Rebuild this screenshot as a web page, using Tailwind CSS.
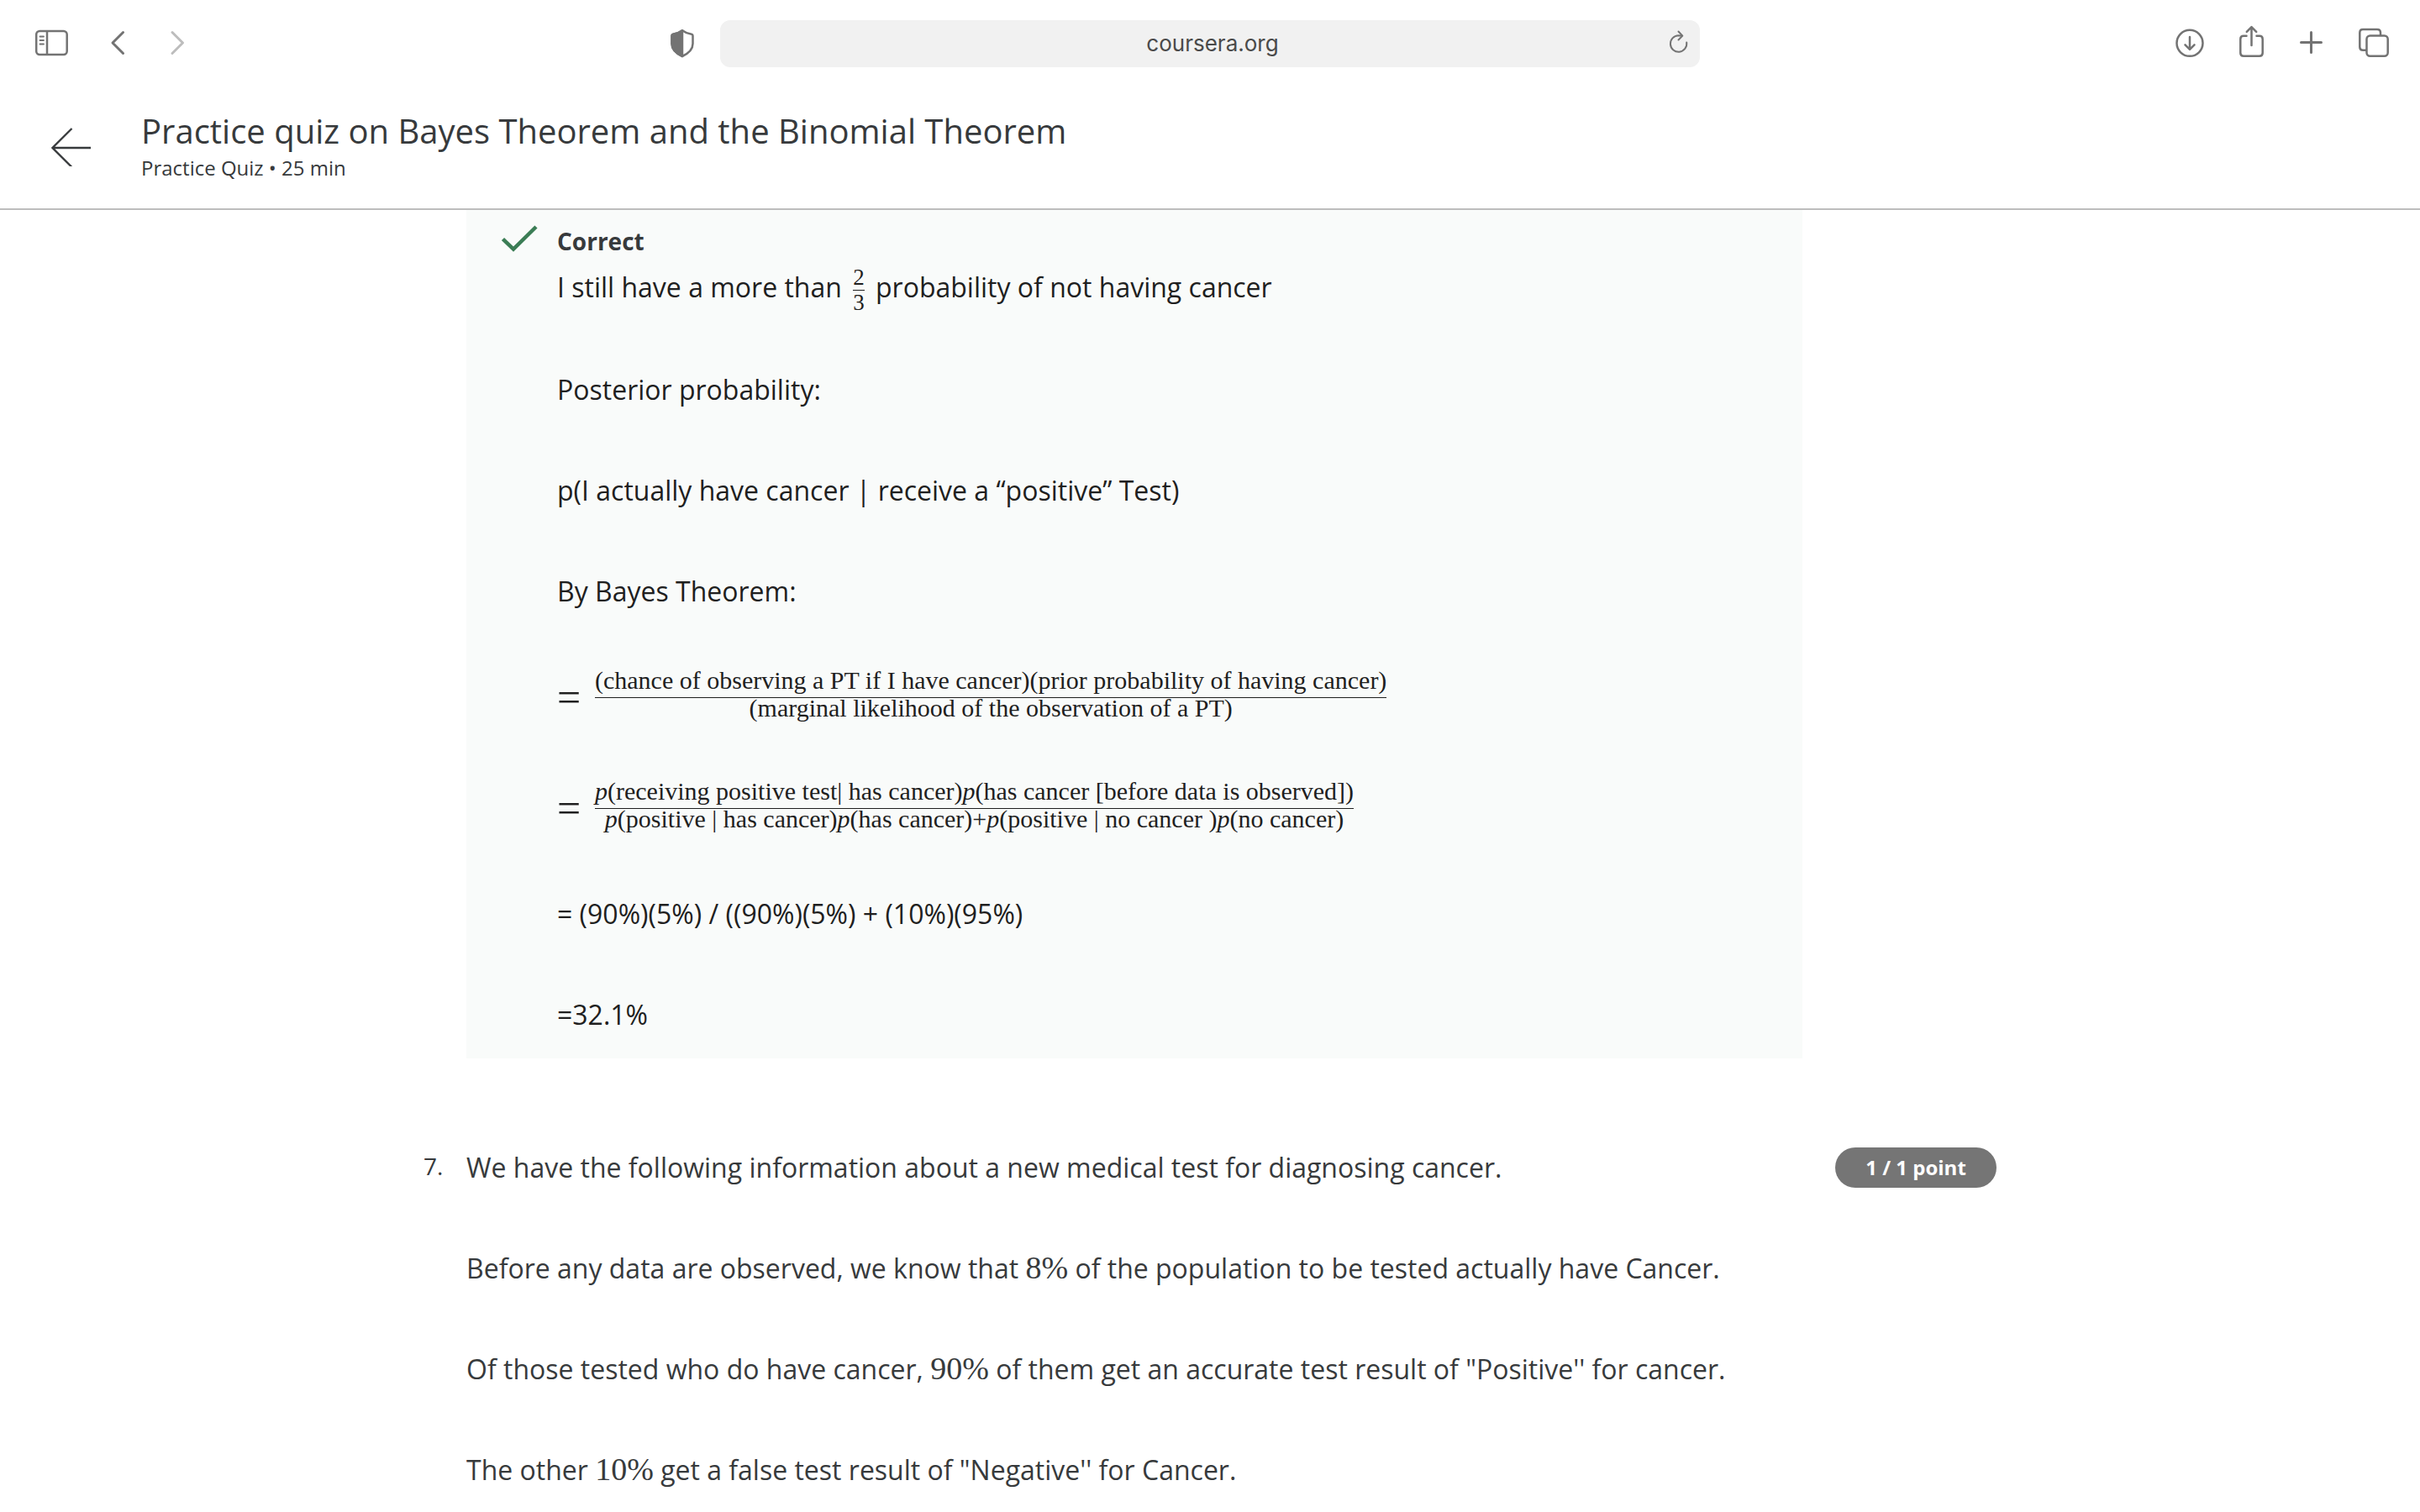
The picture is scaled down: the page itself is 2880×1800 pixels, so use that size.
<!DOCTYPE html>
<html lang="en">
<head>
<meta charset="utf-8">
<title>Practice quiz on Bayes Theorem and the Binomial Theorem</title>
<script src="https://cdn.jsdelivr.net/npm/@tailwindcss/browser@4"></script>
</head>
<body class="flex h-screen flex-col overflow-hidden bg-white font-['Open_Sans',sans-serif] text-[#373a3c]">

<!-- Browser toolbar -->
<nav aria-label="Browser" class="grid shrink-0 grid-cols-[1fr_40.5%_1fr] items-center pt-6 pb-5 text-[#737373]">
  <div class="flex items-center justify-between pr-[31px] pl-[41px]">
    <div class="flex items-center gap-[50px]">
      <button aria-label="Sidebar"><svg class="block" width="40" height="40" viewBox="0 0 40 40" fill="none" stroke="currentColor" stroke-width="2.5"><rect x="2.2" y="5" width="36.5" height="28" rx="4"/><path d="M15 5v28"/><path d="M6.500 11.500h4.500M6.500 16h4.500M6.500 20.500h4.500" stroke-width="1.800" stroke-linecap="round"/></svg></button>
      <button aria-label="Back"><svg class="block" width="20" height="40" viewBox="0 0 20 40" fill="none" stroke="currentColor" stroke-width="3" stroke-linecap="round" stroke-linejoin="round"><path d="M15.500 6.500L3 19L15.500 31.500"/></svg></button>
      <button aria-label="Forward" class="text-[#bdbdbd]"><svg class="block" width="20" height="40" viewBox="0 0 20 40" fill="none" stroke="currentColor" stroke-width="3" stroke-linecap="round" stroke-linejoin="round"><path d="M4 6.500L16.500 19L4 31.500"/></svg></button>
    </div>
    <button aria-label="Privacy report"><svg class="block" width="28" height="40" viewBox="0 0 28 40" fill="none" stroke="currentColor" stroke-width="2.500" stroke-linejoin="round"><path d="M14 4.300C17.500 7 21 8.200 25 8.800Q26.500 9 26.500 10.500V20C26.500 27.500 21.500 31.500 14 35C6.500 31.500 1.500 27.500 1.500 20V10.500Q1.500 9 3 8.800C7 8.200 10.500 7 14 4.300Z"/><path d="M14 4.300V35C6.500 31.500 1.500 27.500 1.500 20V10.500Q1.500 9 3 8.800C7 8.200 10.500 7 14 4.300Z" fill="currentColor"/></svg></button>
  </div>
  <div class="grid h-14 grid-cols-[46px_1fr_40px] items-center rounded-xl bg-[#f1f1f1]">
    <input aria-label="Address" value="coursera.org" class="col-start-2 min-w-0 bg-transparent text-center font-[Inter,sans-serif] text-[26px] leading-8 text-[#4a4a4a] outline-none">
    <button aria-label="Reload"><svg class="block" width="30" height="40" viewBox="0 0 30 40" fill="none" stroke="currentColor" stroke-width="2" stroke-linecap="round" stroke-linejoin="round"><path d="M24.200 18.500A9.700 9.700 0 1 1 14.500 10.300L18.500 10.600"/><path d="M14.500 5.500L19.300 10.600L14.500 15.500"/></svg></button>
  </div>
  <div class="flex items-center justify-end gap-[41px] pr-9">
    <button aria-label="Downloads"><svg class="block" width="34" height="40" viewBox="0 0 34 40" fill="none" stroke="currentColor" stroke-width="2.500" stroke-linecap="round" stroke-linejoin="round"><circle cx="17" cy="19.300" r="15.500"/><path d="M17 12v14.500M11.500 21.300l5.500 5.500 5.500-5.500"/></svg></button>
    <button aria-label="Share"><svg class="block overflow-visible" width="30" height="40" viewBox="0 0 30 40" fill="none" stroke="currentColor" stroke-width="2.500" stroke-linecap="round" stroke-linejoin="round"><path d="M9.500 10.800H6Q2.300 10.800 2.300 14.500V31Q2.300 34.700 6 34.700H25Q28.700 34.700 28.700 31V14.500Q28.700 10.800 25 10.800H21.500"/><path d="M15.500 22V0.500M9.800 5.800l5.700-5.700 5.700 5.700"/></svg></button>
    <button aria-label="New tab"><svg class="block" width="30" height="40" viewBox="0 0 30 40" fill="none" stroke="currentColor" stroke-width="3" stroke-linecap="round"><path d="M15.500 6.500v24M3.500 18.500h24"/></svg></button>
    <button aria-label="Tab overview"><svg class="block" width="38" height="40" viewBox="0 0 38 40" fill="none" stroke="currentColor" stroke-width="2.500" stroke-linejoin="round"><path d="M27 10.500V7Q27 3 23 3H6Q2.300 3 2.300 7V24Q2.300 27.700 6 27.700H10.500"/><rect x="10.500" y="10.500" width="25.200" height="24.200" rx="4"/></svg></button>
  </div>
</nav>

<!-- Quiz header -->
<header class="flex shrink-0 items-center gap-[59px] border-b-2 border-[#bdbdbd] pt-8 pb-8 pl-[61px]">
  <button aria-label="Back to course"><svg class="block" width="48" height="48" viewBox="0 0 48 48" fill="none" stroke="#373a3c" stroke-width="2.300"><path d="M47 26H2M24.500 3L1.500 26L24.500 49"/></svg></button>
  <div class="flex flex-col gap-1">
    <h1 class="text-[40px] leading-[48px]">Practice quiz on Bayes Theorem and the Binomial Theorem</h1>
    <p class="text-[24px] leading-8">Practice Quiz • 25 min</p>
  </div>
</header>

<main class="mx-auto grid w-full max-w-[1872px] grow grid-cols-[51px_1fr_39px_192px] content-start gap-y-[106px] overflow-hidden text-[32px] leading-[48px]">

  <!-- Feedback for the previous question -->
  <section class="col-start-2 flex bg-[#f9fbfa] pt-4 pb-7 pl-[42px] text-[#1f1f1f]">
    <svg class="mt-px mr-0.5 w-16 shrink-0" width="64" height="34" viewBox="0 0 64 34" fill="none" stroke="#3b7d55" stroke-width="4.500"><path d="M1.500 17.500L14 29.500L41 3"/></svg>
    <div class="flex flex-col">
      <h2 class="mb-2.5 text-[28px] leading-[42px] font-bold text-[#373a3c]">Correct</h2>
      <div class="flex flex-col gap-[72px]">
        <p class="h-[50px]">I still have a more than
          <span class="mx-[5px] -my-4 inline-flex flex-col text-center align-middle font-['Liberation_Serif',serif] text-[27px] leading-6"><span class="border-b border-current pb-[3px]">2</span><span class="pt-0.5">3</span></span>
          probability of not having cancer</p>
        <p>Posterior probability:</p>
        <p>p(I actually have cancer | receive a “positive” Test)</p>
        <p>By Bayes Theorem:</p>
        <div class="flex h-[60px] items-center gap-4 font-['Liberation_Serif',serif]">
          <span class="w-[29px] text-[50px]">=</span>
          <span class="flex flex-col text-center text-[30px] leading-6"><span class="border-b border-current pb-2">(chance of observing a PT if I have cancer)(prior probability of having cancer)</span><span class="pb-2">(marginal likelihood of the observation of a PT)</span></span>
        </div>
        <div class="flex h-[60px] items-center gap-4 font-['Liberation_Serif',serif]">
          <span class="w-[29px] text-[50px]">=</span>
          <span class="flex flex-col text-center text-[30px] leading-6"><span class="border-b border-current pb-2"><i>p</i>(receiving positive test| has cancer)<i>p</i>(has cancer [before data is observed])</span><span class="pb-2"><i>p</i>(positive | has cancer)<i>p</i>(has cancer)+<i>p</i>(positive | no cancer )<i>p</i>(no cancer)</span></span>
        </div>
        <p>= (90%)(5%) / ((90%)(5%) + (10%)(95%)</p>
        <p>=32.1%</p>
      </div>
    </div>
  </section>

  <!-- Question 7 -->
  <section class="col-span-4 grid grid-cols-subgrid items-start">
    <span class="text-[28px] leading-[44px]">7.</span>
    <div class="col-span-2 flex flex-col gap-[72px]">
      <p>We have the following information about a new medical test for diagnosing cancer.</p>
      <p>Before any data are observed, we know that <span class="font-['Liberation_Serif',serif] text-[38px] leading-none">8%</span> of the population to be tested actually have Cancer.</p>
      <p>Of those tested who do have cancer, <span class="font-['Liberation_Serif',serif] text-[38px] leading-none">90%</span> of them get an accurate test result of "Positive'' for cancer.</p>
      <p>The other <span class="font-['Liberation_Serif',serif] text-[38px] leading-none">10%</span> get a false test result of "Negative'' for Cancer.</p>
    </div>
    <span class="rounded-full bg-[#757575] text-center text-[24px] leading-[48px] font-bold text-white">1 / 1 point</span>
  </section>
</main>
</body>
</html>
